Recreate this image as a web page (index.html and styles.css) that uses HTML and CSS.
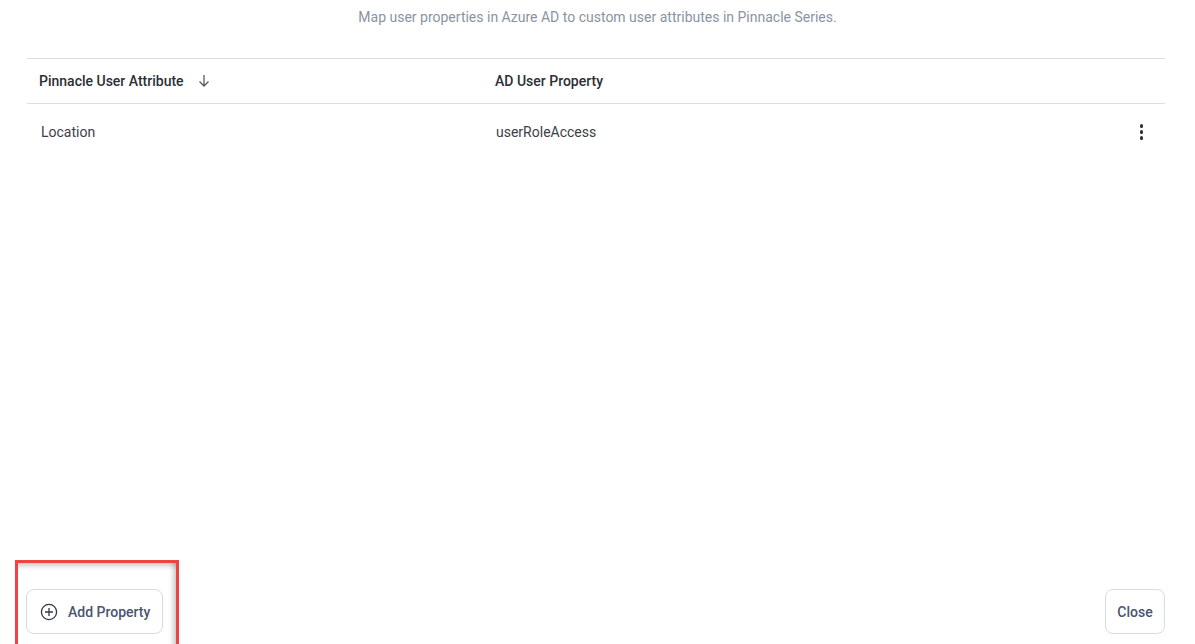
FILE: index.html
```html
<!DOCTYPE html>
<html lang="en">

<head>
    <meta charset="UTF-8">
    <title>Custom User Attributes</title>
    <link rel="stylesheet" href="styles.css">
</head>

<body>
    <div class="page">
        <p class="subtitle">Map user properties in Azure AD to custom user attributes in Pinnacle Series.</p>

        <div class="table">
            <div class="row head">
                <div class="cell first">
                    Pinnacle User Attribute
                    <svg class="sort" width="12" height="14" viewBox="0 0 12 14">
                        <path d="M6 1v11M1.5 7.5L6 12l4.5-4.5" fill="none" stroke="#555b66" stroke-width="1.3"/>
                    </svg>
                </div>
                <div class="cell second">AD User Property</div>
                <div class="cell actions"></div>
            </div>
            <div class="row body">
                <div class="cell first">Location</div>
                <div class="cell second">userRoleAccess</div>
                <div class="cell actions">
                    <span class="kebab"><i></i><i></i><i></i></span>
                </div>
            </div>
        </div>

        <div class="spacer"></div>

        <div class="footer">
            <button class="btn add">
                <svg width="18" height="18" viewBox="0 0 18 18">
                    <circle cx="9" cy="9" r="7.6" fill="none" stroke="#333845" stroke-width="1.3"/>
                    <path d="M9 5v8M5 9h8" stroke="#333845" stroke-width="1.3"/>
                </svg>
                Add Property
            </button>
            <button class="btn close">Close</button>
        </div>
    </div>

    <div class="highlight"></div>
</body>

</html>
```

FILE: styles.css
```css
html, body {
    margin: 0;
    height: 100%;
    background: #fff;
    font-family: Roboto, "Liberation Sans", sans-serif;
}

.page {
    display: flex;
    flex-direction: column;
    height: 100vh;
    padding: 0 30px 0 27px;
    box-sizing: border-box;
}

.subtitle {
    margin: 0;
    padding-top: 7px;
    text-align: center;
    font-size: 14px;
    line-height: 20px;
    color: #8a93a3;
    padding-left: 3px;
}

.table {
    margin-top: 31px;
    border-top: 1px solid #dcdde0;
}

.row {
    display: flex;
    align-items: center;
}

.row.head {
    height: 44px;
    border-bottom: 1px solid #dcdde0;
    font-size: 14px;
    font-weight: 500;
    color: #2c2f36;
}

.row.body {
    height: 56px;
    font-size: 14px;
    color: #3d4047;
}

.cell.first {
    width: 456px;
    padding-left: 12px;
    display: flex;
    align-items: center;
}

.row.body .cell.first {
    width: 455px;
    padding-left: 14px;
}

.cell.second {
    flex: 1;
}

.sort {
    margin-left: 14px;
}

.cell.actions {
    width: 40px;
    display: flex;
    justify-content: center;
}

.kebab {
    display: flex;
    flex-direction: column;
    gap: 2.5px;
    margin-left: -7px;
}

.kebab i {
    width: 3.5px;
    height: 3.5px;
    border-radius: 50%;
    background: #2a2e38;
}

.spacer {
    flex: 1;
}

.footer {
    display: flex;
    justify-content: space-between;
    padding-bottom: 10px;
}

.btn {
    height: 45px;
    border: 1px solid #d9dbe2;
    border-radius: 8px;
    background: #fff;
    font-family: Roboto, "Liberation Sans", sans-serif;
    font-size: 14px;
    font-weight: 500;
    color: #4a5570;
    display: flex;
    align-items: center;
    box-sizing: border-box;
}

.btn.add {
    margin-left: -1px;
    width: 137px;
    padding: 0 0 0 13px;
    gap: 10px;
}

.btn.close {
    width: 60px;
    justify-content: center;
    padding: 0;
}

.highlight {
    position: absolute;
    left: 15px;
    top: 560px;
    width: 158px;
    height: 90px;
    border: 3px solid #ef4444;
    box-shadow: inset 0 6px 5px -3px rgba(0, 0, 0, 0.2), inset -6px 0 5px -3px rgba(0, 0, 0, 0.2);
}
```
